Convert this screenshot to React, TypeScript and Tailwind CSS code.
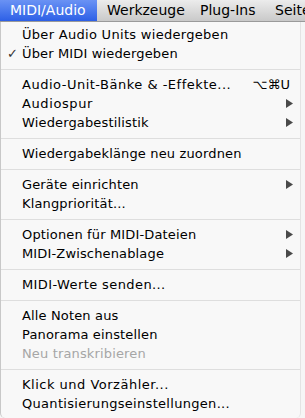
import React from "react";

type Item =
  | { type: "sep" }
  | { type: "item"; label: string; check?: boolean; sub?: boolean; shortcut?: string; disabled?: boolean; track?: string };

const items: Item[] = [
  { type: "item", label: "Über Audio Units wiedergeben", track: "tracking-[0.3px]" },
  { type: "item", label: "Über MIDI wiedergeben", check: true },
  { type: "sep" },
  { type: "item", label: "Audio-Unit-Bänke & -Effekte...", shortcut: "⌥⌘U", track: "tracking-[0.5px]" },
  { type: "item", label: "Audiospur", sub: true, track: "tracking-[0.6px]" },
  { type: "item", label: "Wiedergabestilistik", sub: true },
  { type: "sep" },
  { type: "item", label: "Wiedergabeklänge neu zuordnen" },
  { type: "sep" },
  { type: "item", label: "Geräte einrichten", sub: true },
  { type: "item", label: "Klangpriorität..." },
  { type: "sep" },
  { type: "item", label: "Optionen für MIDI-Dateien", sub: true },
  { type: "item", label: "MIDI-Zwischenablage", sub: true },
  { type: "sep" },
  { type: "item", label: "MIDI-Werte senden...", track: "tracking-[0.4px]" },
  { type: "sep" },
  { type: "item", label: "Alle Noten aus" },
  { type: "item", label: "Panorama einstellen" },
  { type: "item", label: "Neu transkribieren", disabled: true },
  { type: "sep" },
  { type: "item", label: "Klick und Vorzähler...", track: "tracking-[0.5px]" },
  { type: "item", label: "Quantisierungseinstellungen...", track: "tracking-[0.3px]" },
];

function Triangle() {
  return (
    <svg width="7" height="9" viewBox="0 0 7 9" className="block">
      <path d="M0 0 L7 4.5 L0 9 Z" fill="#4a4a4a" />
    </svg>
  );
}

export default function App() {
  return (
    <div
      className="w-[305px] h-[418px] overflow-hidden bg-[#f6f6f6] flex flex-col"
      style={{ fontFamily: '"DejaVu Sans", "Liberation Sans", sans-serif' }}
    >
      <div className="h-[22px] flex items-stretch bg-gradient-to-b from-[#ececec] to-[#c9c9c9] border-b border-[#9a9a9a] text-[14px] text-black whitespace-nowrap">
        <div className="w-[97px] shrink-0 flex items-center pl-[10px] text-white bg-gradient-to-b from-[#6a92f4] to-[#2d5fe6]">
          MIDI/Audio
        </div>
        <div className="w-[93px] shrink-0 pl-[10px] flex items-center">Werkzeuge</div>
        <div className="w-[75px] shrink-0 pl-[10px] flex items-center">Plug-Ins</div>
        <div className="pl-[10px] flex items-center">Seite</div>
      </div>
      <div className="flex-1 w-[301px] bg-[#f8f8f8] border-l border-[#c8c8c8] border-r border-r-[#e4e4e4] rounded-b-[5px] pt-[3px] text-[13px] text-black">
        {items.map((it, i) =>
          it.type === "sep" ? (
            <div key={i} className="h-[12px] flex items-center">
              <div className="h-px w-full bg-[#dedede]" />
            </div>
          ) : (
            <div
              key={i}
              className={`h-[19px] flex items-center pl-[21px] pr-[7px] relative leading-[19px] ${
                it.disabled ? "text-[#a6a6a6]" : "text-black"
              }`}
            >
              {it.check && (
                <span className="absolute left-[6px] top-0 text-[13px] text-[#333]">✓</span>
              )}
              <span className={`flex-1 whitespace-nowrap ${it.track ?? "tracking-[0.15px]"}`}>{it.label}</span>
              {it.shortcut && <span className="whitespace-nowrap mr-[3px]">{it.shortcut}</span>}
              {it.sub && <Triangle />}
            </div>
          )
        )}
      </div>
    </div>
  );
}
